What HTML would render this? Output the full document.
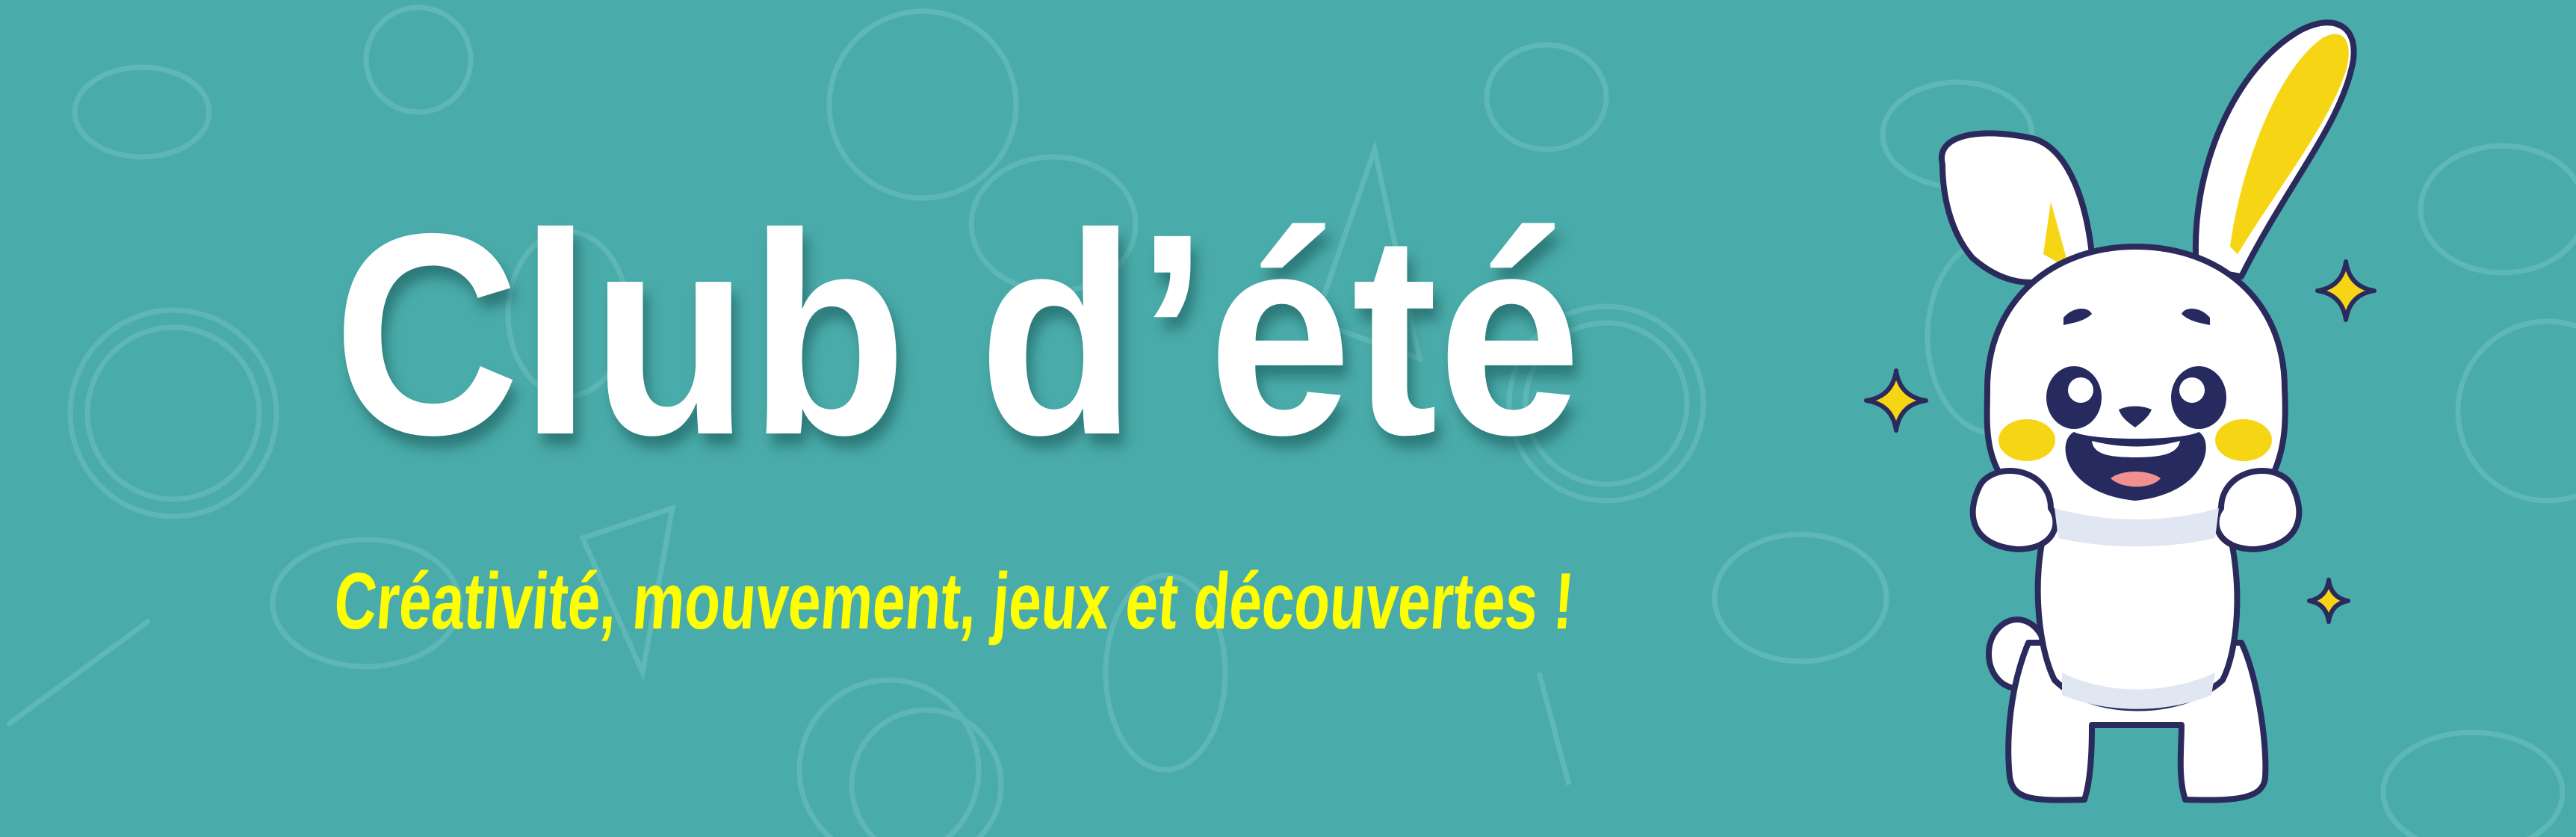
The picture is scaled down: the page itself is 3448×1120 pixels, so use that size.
<!DOCTYPE html>
<html><head><meta charset="utf-8"><style>
html,body{margin:0;padding:0}
body{width:3448px;height:1120px;background:#4aacaa;position:relative;overflow:hidden;font-family:"Liberation Sans",sans-serif}
.t{position:absolute;left:446px;top:256px;font-size:384px;font-weight:bold;color:#fff;letter-spacing:0;white-space:nowrap;line-height:1;text-shadow:8px 16px 18px rgba(20,80,80,.55);transform:scaleX(.9);transform-origin:left top}
.s{position:absolute;left:452px;top:751px;font-size:107px;font-weight:bold;color:#ffff00;white-space:nowrap;line-height:1;transform:scaleX(.73) skewX(-6deg);transform-origin:left top}
svg{position:absolute;left:0;top:0}
</style></head><body>
<svg width="3448" height="1120" viewBox="0 0 3448 1120">
<g fill="none" stroke="#6cbfbe" stroke-width="7" opacity=".6">
<circle cx="232" cy="553" r="138"/><circle cx="232" cy="553" r="115"/>
<circle cx="1235" cy="140" r="125"/><circle cx="1190" cy="1030" r="120"/>
<circle cx="2150" cy="540" r="130"/><circle cx="2150" cy="540" r="108"/>
<circle cx="3410" cy="550" r="120"/><circle cx="1240" cy="1050" r="100"/>
<ellipse cx="490" cy="807" rx="125" ry="85"/><ellipse cx="1410" cy="300" rx="110" ry="90"/>
<ellipse cx="2410" cy="800" rx="115" ry="85"/><ellipse cx="3350" cy="280" rx="110" ry="85"/>
<ellipse cx="3310" cy="1060" rx="120" ry="80"/><ellipse cx="1560" cy="900" rx="80" ry="130"/>
<ellipse cx="190" cy="150" rx="90" ry="60"/><ellipse cx="560" cy="80" rx="70" ry="70"/>
<ellipse cx="2070" cy="130" rx="80" ry="70"/><ellipse cx="2620" cy="180" rx="100" ry="70"/>
<ellipse cx="760" cy="420" rx="80" ry="110"/><ellipse cx="2670" cy="450" rx="90" ry="130"/>
<path d="M10 970 L200 830 M1840 200 L1900 480 L1760 430Z M780 720 L900 680 L860 900Z M2060 900 L2100 1050"/>
</g>
<g stroke="#2a2b5c" stroke-width="8" stroke-linejoin="round">
<path d="M2940 360 C2930 230 2990 90 3080 40 C3130 15 3160 40 3148 90 C3130 170 3060 250 3000 370Z" fill="#fff"/>
<path d="M2985 330 C3000 220 3050 90 3110 50 C3140 35 3150 60 3140 95 C3115 170 3050 250 2995 340Z" fill="#f6d515" stroke="none"/>
<path d="M2600 220 C2590 180 2650 170 2720 185 C2760 195 2790 250 2800 340 L2760 370 C2720 385 2680 380 2640 345 C2610 310 2600 260 2600 220Z" fill="#fff"/>
<path d="M2745 270 L2770 360 L2735 340Z" fill="#f6d515" stroke="none"/>
<ellipse cx="2700" cy="875" rx="38" ry="46" fill="#fff"/>
<path d="M2715 860 C2690 920 2685 990 2690 1040 C2695 1070 2720 1072 2790 1070 C2800 1040 2800 990 2800 970 L2920 970 C2920 1000 2915 1040 2925 1070 C2990 1072 3030 1070 3032 1040 C3035 990 3020 900 3000 860Z" fill="#fff"/>
<path d="M2740 700 C2720 760 2725 860 2750 910 C2800 960 2920 960 2975 910 C3000 860 3000 760 2980 700Z" fill="#fff"/>
<path d="M2858 330 C2750 330 2660 400 2660 520 C2660 560 2655 600 2680 640 C2720 700 2800 720 2858 720 C2920 720 3000 700 3040 640 C3060 600 3060 560 3058 520 C3058 400 2970 330 2858 330Z" fill="#fff"/>
<path d="M2650 650 C2630 690 2640 730 2700 735 C2750 735 2760 700 2745 680 C2745 650 2720 630 2690 630 C2670 630 2655 640 2650 650Z" fill="#fff"/>
<path d="M3068 650 C3088 690 3078 730 3018 735 C2968 735 2958 700 2973 680 C2973 650 2998 630 3028 630 C3048 630 3063 640 3068 650Z" fill="#fff"/>
</g>
<g fill="#e0e6f2">
<path d="M2760 900 C2820 930 2900 930 2965 900 L2960 930 C2900 955 2820 955 2760 930Z"/>
<path d="M2750 680 C2820 700 2900 700 2970 680 L2965 720 C2900 735 2820 735 2755 720Z"/>
</g>
<g fill="#262a5e">
<ellipse cx="2776" cy="532" rx="37" ry="42"/><ellipse cx="2943" cy="532" rx="37" ry="42"/>
<path d="M2776 578 C2800 590 2920 590 2943 578 C2965 590 2955 660 2858 670 C2760 660 2752 590 2776 578Z"/>
<path d="M2836 548 C2850 542 2866 542 2880 548 C2875 560 2865 566 2858 572 C2850 566 2840 560 2836 548Z"/>
<path d="M2762 425 C2775 410 2795 410 2800 420 C2790 430 2775 432 2762 435Z"/>
<path d="M2958 425 C2945 410 2925 410 2920 420 C2930 430 2945 432 2958 435Z"/>
</g>
<g fill="#fff"><circle cx="2785" cy="522" r="17"/><circle cx="2934" cy="522" r="17"/>
<path d="M2800 590 C2840 600 2880 600 2918 590 C2915 605 2900 612 2858 612 C2815 612 2802 605 2800 590Z"/></g>
<path d="M2825 640 C2840 628 2876 628 2892 640 C2880 655 2840 655 2825 640Z" fill="#f0908f"/>
<ellipse cx="2713" cy="589" rx="38" ry="28" fill="#f6d515"/><ellipse cx="3003" cy="589" rx="38" ry="28" fill="#f6d515"/>
<g fill="#f6d515" stroke="#2a2b5c" stroke-width="6" stroke-linejoin="round">
<path d="M2538 496 Q2543 531 2578 536 Q2543 541 2538 576 Q2533 541 2498 536 Q2533 531 2538 496Z"/>
<path d="M3140 350 Q3145 384 3178 389 Q3145 394 3140 428 Q3135 394 3102 389 Q3135 384 3140 350Z"/>
<path d="M3117 776 Q3120 800 3143 804 Q3120 808 3117 832 Q3114 808 3091 804 Q3114 800 3117 776Z"/>
</g>
</svg>
<div class="t">Club d’été</div>
<div class="s">Créativité, mouvement, jeux et découvertes !</div>
</body></html>
